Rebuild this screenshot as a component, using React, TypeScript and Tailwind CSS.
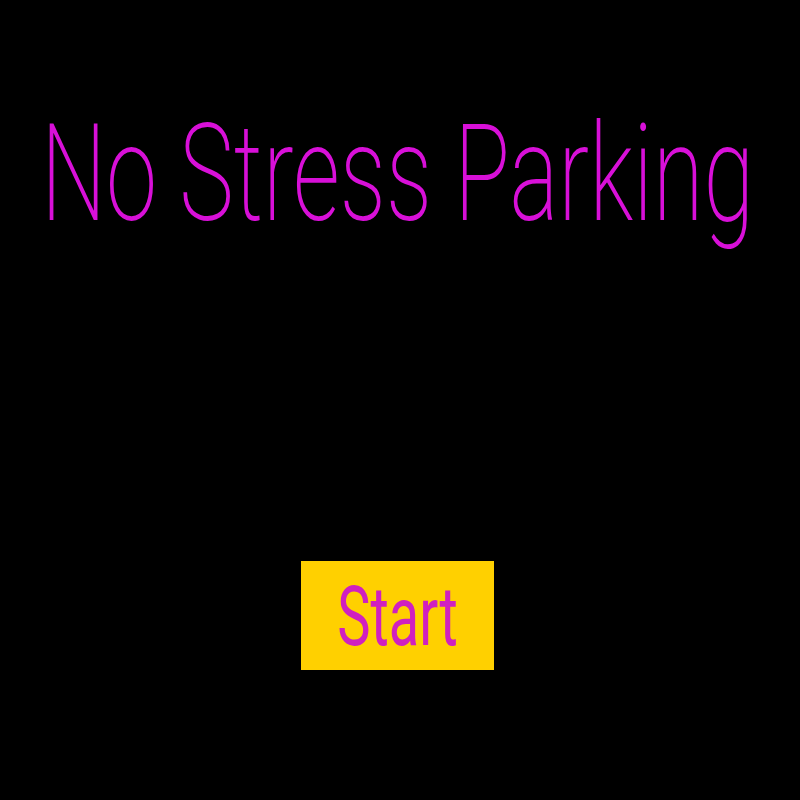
import React from 'react'

const App: React.FC = () => {
    return (
        <div className="w-[800px] h-[800px] bg-black flex flex-col items-center pr-[5px]" style={{ fontFamily: 'Roboto, "Liberation Sans", sans-serif' }}>
            <div className="mt-[128px] h-[90px] text-[92px] leading-none font-extralight text-[#d810d8] whitespace-nowrap scale-y-[1.48]">
                No Stress Parking
            </div>
            <button className="mt-[343px] w-[193px] h-[109px] bg-[#ffd000] flex items-center justify-center">
                <span className="text-[56px] leading-none font-normal text-[#d020c0] scale-y-150">Start</span>
            </button>
        </div>
    )
}

export default App
